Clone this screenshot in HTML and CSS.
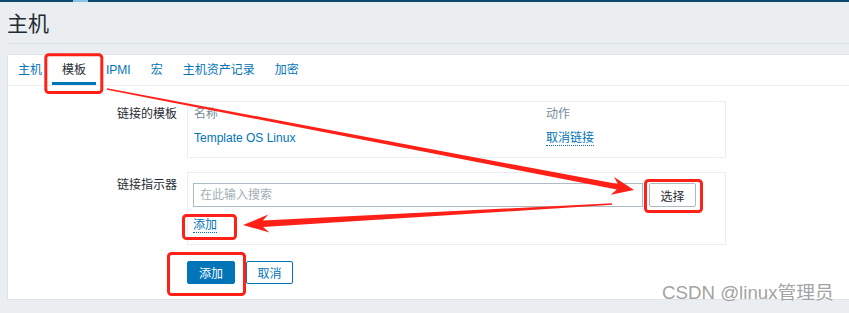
FILE: index.html
```html
<!DOCTYPE html>
<html lang="zh-CN">
<head>
<meta charset="utf-8">
<title>主机</title>
<link rel="stylesheet" href="styles.css">
</head>
<body>
<div class="topbar"><span class="topbar-seg"></span></div>
<main class="page">
  <header class="page-header"><h1 class="page-title">主机</h1></header>
  <section class="panel">
    <nav class="tabs">
      <a class="tab">主机</a>
      <a class="tab tab-active">模板</a>
      <a class="tab">IPMI</a>
      <a class="tab">宏</a>
      <a class="tab">主机资产记录</a>
      <a class="tab">加密</a>
    </nav>
    <form class="form">
      <div class="form-row">
        <label class="form-label">链接的模板</label>
        <div class="box box-table">
          <div class="cell cell-head">名称</div>
          <div class="cell cell-head">动作</div>
          <div class="cell"><a class="link">Template OS Linux</a></div>
          <div class="cell"><a class="link link-dotted">取消链接</a></div>
        </div>
      </div>
      <div class="form-row form-row-gap">
        <label class="form-label">链接指示器</label>
        <div class="box box-search">
          <div class="search-line">
            <input class="search-input" type="text" placeholder="在此输入搜索">
            <button type="button" class="btn-alt">选择</button>
          </div>
          <a class="link link-dotted add-link">添加</a>
        </div>
      </div>
      <div class="actions">
        <button type="button" class="btn-primary">添加</button>
        <button type="button" class="btn-cancel">取消</button>
      </div>
    </form>
  </section>
</main>

<svg class="annot" width="849" height="313" viewBox="0 0 849 313">
  <g fill="none" stroke="#ff2018" stroke-width="3">
    <rect x="45.8" y="54.8" width="56" height="37.7" rx="3"/>
    <rect x="645.5" y="180.5" width="56" height="31" rx="3"/>
    <rect x="183.5" y="215.5" width="52" height="23" rx="3"/>
    <rect x="168.5" y="253.5" width="76" height="41" rx="3"/>
  </g>
  <g fill="#ff2018">
    <polygon points="107.1,88.3 617.8,184.1 614.1,177.1 634,190 610.7,194.7 616.8,189.5 106.9,89.7"/>
    <polygon points="612,203.3 262.8,220.6 268.4,214.5 243,225 269.5,232.5 263.1,227.1 612,204.7"/>
  </g>
</svg>
<div class="watermark">CSDN @linux管理员</div>
</body>
</html>
```

FILE: styles.css
```css
html, body {
  margin: 0;
  padding: 0;
  overflow: hidden;
}
body {
  background: #ebeef0;
  font-family: "Liberation Sans", "Noto Sans CJK SC", sans-serif;
  font-size: 12px;
  color: #1f2c33;
  width: 849px;
  height: 313px;
  position: relative;
}
.topbar {
  height: 2px;
  background: #0c4a70;
  display: flex;
}
.topbar-seg {
  margin-left: 73px;
  width: 15px;
  background: #87c2eb;
}
.page {
  padding-left: 7px;
}
.page-header {
  border-bottom: 1px solid #dde2e5;
  display: flex;
  align-items: center;
  padding-top: 2px;
  box-sizing: border-box;
  height: 42px;
}
.page-title {
  margin: 0;
  font-weight: normal;
  font-size: 21px;
  line-height: 24px;
  color: #1f2c33;
}
.panel {
  margin-top: 10px;
  background: #fff;
  border: 1px solid #dfe4e7;
  border-right: 0;
}
.tabs {
  display: flex;
  height: 30px;
  border-bottom: 1px solid #ebeef0;
}
.tab {
  padding: 3px 10px 0;
  border-bottom: 3px solid transparent;
  line-height: 24px;
  color: #0275b8;
  cursor: pointer;
}
.tab-active {
  color: #1f2c33;
  border-bottom-color: #0275b8;
}
.form {
  padding: 15px 0 15px;
}
.form-row {
  display: grid;
  grid-template-columns: 169px 539px;
  column-gap: 10px;
}
.form-row-gap {
  margin-top: 14px;
}
.form-label {
  text-align: right;
  line-height: 16px;
  padding-top: 5px;
}
.box {
  border: 1px solid #ebeef0;
  box-sizing: border-box;
}
.box-table {
  display: grid;
  grid-template-columns: 352px 1fr;
  grid-template-rows: 23px 26px;
  padding: 0 6px 6px;
}
.cell {
  display: flex;
  align-items: center;
  line-height: 16px;
}
.cell-head {
  color: #768d99;
}
.link {
  color: #0275b8;
  cursor: pointer;
}
.link-dotted {
  display: inline-block;
  line-height: 14px;
  border-bottom: 1px dotted #0275b8;
}
.box-search {
  padding: 10px 5px 11px;
}
.search-line {
  display: flex;
  gap: 6px;
}
.search-input {
  width: 450px;
  height: 24px;
  box-sizing: border-box;
  border: 1px solid #acbbc3;
  padding: 0 6px;
  margin: 0;
  font-family: inherit;
  font-size: 12px;
  color: #1f2c33;
  outline: none;
}
.search-input::placeholder {
  color: #a2aeb5;
}
.btn-alt {
  width: 47px;
  height: 24px;
  box-sizing: border-box;
  border: 1px solid #acbbc3;
  border-radius: 2px;
  background: #fff;
  font-family: inherit;
  font-size: 12px;
  color: #1f2c33;
  padding: 0;
  margin: 0;
}
.add-link {
  margin-top: 11px;
}
.actions {
  display: flex;
  gap: 11px;
  margin-top: 16px;
  padding-left: 179px;
}
.btn-primary,
.btn-cancel {
  height: 23px;
  box-sizing: border-box;
  border-radius: 2px;
  font-family: inherit;
  font-size: 12px;
  padding: 0;
  margin: 0;
}
.btn-primary {
  width: 48px;
  background: #0275b8;
  border: 1px solid #0275b8;
  color: #fff;
}
.btn-cancel {
  width: 47px;
  background: #fff;
  border: 1px solid #0275b8;
  color: #0275b8;
}
.annot {
  position: absolute;
  left: 0;
  top: 0;
  pointer-events: none;
}
.watermark {
  position: absolute;
  left: 662px;
  top: 283px;
  font-size: 18.7px;
  line-height: 20px;
  color: #a3a3a3;
  text-shadow: 0 0 1px #fff;
  white-space: nowrap;
}
```
